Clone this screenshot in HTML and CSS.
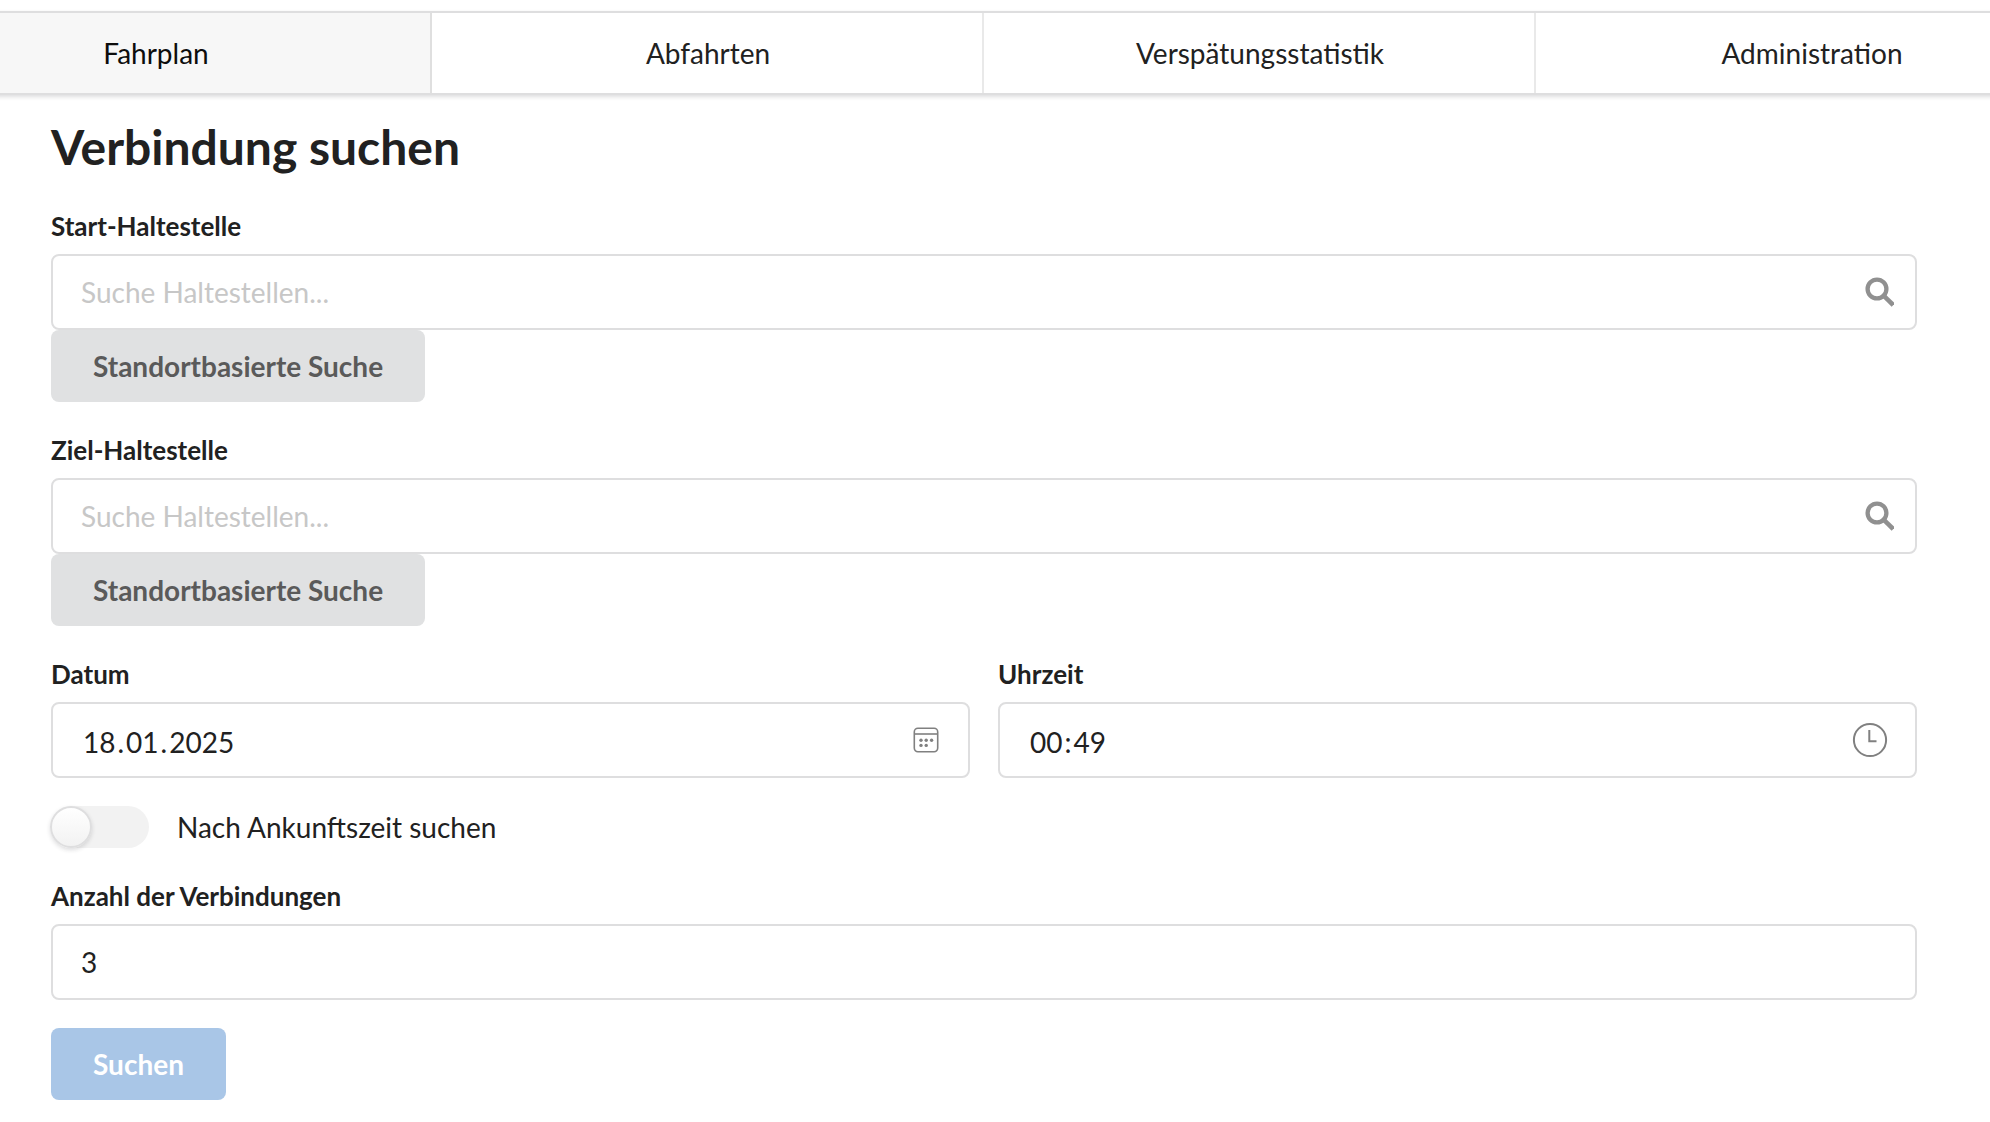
FILE: index.html
```html
<!DOCTYPE html>
<html lang="de">
<head>
<meta charset="utf-8">
<title>Verbindung suchen</title>
<link rel="stylesheet" href="styles.css">
</head>
<body>
<nav class="menu">
  <a class="item active">Fahrplan</a>
  <a class="item">Abfahrten</a>
  <a class="item">Verspätungsstatistik</a>
  <a class="item">Administration</a>
</nav>
<main class="content">
  <h2 class="header">Verbindung suchen</h2>
  <form class="form">
    <div class="field">
      <label class="label">Start-Haltestelle</label>
      <div class="input">
        <input class="control" type="text" placeholder="Suche Haltestellen...">
        <svg class="icon" width="29" height="30" viewBox="0 0 29 30"><circle cx="12" cy="12" r="9.4" fill="none" stroke="currentColor" stroke-width="4.3"/><path d="M18.8 18.8L26.6 26.4" stroke="currentColor" stroke-width="4.6" stroke-linecap="square"/></svg>
      </div>
      <button class="button" type="button">Standortbasierte Suche</button>
    </div>
    <div class="field">
      <label class="label">Ziel-Haltestelle</label>
      <div class="input">
        <input class="control" type="text" placeholder="Suche Haltestellen...">
        <svg class="icon" width="29" height="30" viewBox="0 0 29 30"><circle cx="12" cy="12" r="9.4" fill="none" stroke="currentColor" stroke-width="4.3"/><path d="M18.8 18.8L26.6 26.4" stroke="currentColor" stroke-width="4.6" stroke-linecap="square"/></svg>
      </div>
      <button class="button" type="button">Standortbasierte Suche</button>
    </div>
    <div class="fields">
      <div class="field">
        <label class="label">Datum</label>
        <div class="input picker date">
          <div class="value"><span class="part">18</span>.<span class="part">01</span>.<span class="part">2025</span></div>
          <svg class="icon" width="26" height="26" viewBox="0 0 26 26" fill="none" stroke="currentColor" stroke-width="1.6"><rect x="1.3" y="1.3" width="23.4" height="23.4" rx="3.6"/><path d="M1.3 7H24.7"/><g fill="currentColor" stroke="none"><circle cx="8" cy="13.2" r="1.7"/><circle cx="13.2" cy="13.2" r="1.7"/><circle cx="18.6" cy="13.2" r="1.7"/><circle cx="8" cy="18.4" r="1.7"/><circle cx="13.2" cy="18.4" r="1.7"/></g></svg>
        </div>
      </div>
      <div class="field">
        <label class="label">Uhrzeit</label>
        <div class="input picker time">
          <div class="value"><span class="part">00</span>:<span class="part">49</span></div>
          <svg class="icon" width="36" height="36" viewBox="0 0 36 36" fill="none" stroke="currentColor" stroke-width="2"><circle cx="18" cy="18" r="16.1"/><path d="M17.3 8V19.2H24.5"/></svg>
        </div>
      </div>
    </div>
    <div class="field toggle">
      <span class="track"><span class="knob"></span></span>
      <span class="caption">Nach Ankunftszeit suchen</span>
    </div>
    <div class="field">
      <label class="label">Anzahl der Verbindungen</label>
      <div class="input"><input class="control" type="text" value="3"></div>
    </div>
    <button class="button primary" type="button">Suchen</button>
  </form>
</main>
</body>
</html>
```
FILE: styles.css
```css
* {
  box-sizing: border-box;
}

body {
  margin: 0;
  overflow: hidden;
  background: #fff;
  color: #212121;
  font: 28px/40px Lato, sans-serif;
}

.menu {
  display: flex;
  width: 2208px;
  height: 84px;
  margin: 11px 0 0 -120px;
  border: solid #dededf;
  border-width: 2px 0;
  box-shadow: 0 2px 4px rgba(34, 36, 38, .15);
}

.item {
  display: flex;
  flex: 0 0 552px;
  align-items: center;
  justify-content: center;
  padding-left: 2px;
  border-right: 2px solid #e9e9e9;
}

.item.active {
  background: #f7f7f7;
  border-right-color: #dfdfdf;
  color: #0d0d0d;
}

.content {
  width: 1866px;
  margin: 0 0 0 51px;
  padding-top: 22px;
}

.header {
  margin: 0 0 29px;
  font-size: 48px;
  font-weight: 700;
  line-height: 60px;
}

.form,
.field {
  display: flex;
  flex-direction: column;
}

.form {
  gap: 28px;
}

.fields {
  display: grid;
  grid-template-columns: 1fr 1fr;
  gap: 28px;
}

.label {
  margin-bottom: 8px;
  font-size: 26px;
  font-weight: 700;
}

.input {
  display: flex;
  align-items: center;
  height: 76px;
  padding: 0 21px 0 28px;
  border: 2px solid #dededf;
  border-radius: 8px;
}

.control {
  flex: 1;
  min-width: 0;
  padding: 0;
  border: 0;
  outline: 0;
  background: transparent;
  color: inherit;
  font: inherit;
}

.control::placeholder {
  color: #c7c7c7;
}

.icon {
  flex: none;
  color: #909090;
}

.value {
  flex: 1;
  padding-top: 4px;
}

.part {
  padding: 0 2px;
}

.picker .icon {
  color: #808080;
}

.date {
  padding-right: 29px;
}

.time {
  padding-right: 27px;
}

.button {
  align-self: flex-start;
  height: 72px;
  padding: 0 42px;
  border: 0;
  border-radius: 8px;
  background: #e0e1e2;
  color: #5a5a5a;
  font: 700 28px/28px Lato, sans-serif;
}

.primary {
  background: #a9c6e7;
  color: #fff;
}

.toggle {
  flex-direction: row;
  gap: 28px;
  height: 42px;
}

.track {
  width: 98px;
  height: 42px;
  border-radius: 21px;
  background: #f2f2f2;
}

.knob {
  display: block;
  width: 42px;
  height: 42px;
  margin-left: -1px;
  border: 2px solid #dededf;
  border-radius: 50%;
  background: linear-gradient(#fff, #f2f2f2);
  box-shadow: 0 2px 4px rgba(34, 36, 38, .15);
}

.caption {
  padding-top: 1px;
}
```
